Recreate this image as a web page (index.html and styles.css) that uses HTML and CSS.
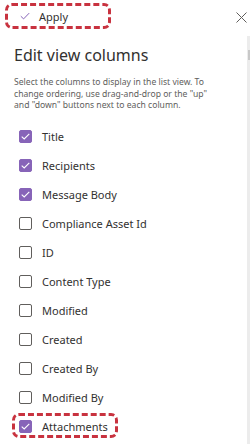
FILE: index.html
```html
<!DOCTYPE html>
<html>
<head>
<meta charset="utf-8">
<link rel="stylesheet" href="styles.css">
</head>
<body>
<div class="header">
  <div class="apply">
    <svg class="apply-icon" width="10" height="8" viewBox="0 0 10 8"><path d="M0.8 4.2 L3.6 6.9 L9.2 1.1" fill="none" stroke="#8764b8" stroke-width="1"/></svg>
    <span>Apply</span>
  </div>
  <svg class="close" width="11" height="11" viewBox="0 0 11 11"><path d="M0.5 0.5 L10.5 10.5 M10.5 0.5 L0.5 10.5" stroke="#605e5c" stroke-width="1"/></svg>
</div>
<div class="main">
  <div class="content">
    <h1 class="title">Edit view columns</h1>
    <p class="desc">Select the columns to display in the list view. To<br>change ordering, use drag-and-drop or the "up"<br>and "down" buttons next to each column.</p>
    <ul class="list">
      <li class="row"><span class="box checked"><svg width="9" height="7" viewBox="0 0 9 7"><path d="M0.7 3.6 L3.2 6 L8.3 0.8" fill="none" stroke="#fff" stroke-width="1.1"/></svg></span>Title</li>
      <li class="row"><span class="box checked"><svg width="9" height="7" viewBox="0 0 9 7"><path d="M0.7 3.6 L3.2 6 L8.3 0.8" fill="none" stroke="#fff" stroke-width="1.1"/></svg></span>Recipients</li>
      <li class="row"><span class="box checked"><svg width="9" height="7" viewBox="0 0 9 7"><path d="M0.7 3.6 L3.2 6 L8.3 0.8" fill="none" stroke="#fff" stroke-width="1.1"/></svg></span>Message Body</li>
      <li class="row"><span class="box"></span>Compliance Asset Id</li>
      <li class="row"><span class="box"></span>ID</li>
      <li class="row"><span class="box"></span>Content Type</li>
      <li class="row"><span class="box"></span>Modified</li>
      <li class="row"><span class="box"></span>Created</li>
      <li class="row"><span class="box"></span>Created By</li>
      <li class="row"><span class="box"></span>Modified By</li>
      <li class="row highlight"><span class="box checked"><svg width="9" height="7" viewBox="0 0 9 7"><path d="M0.7 3.6 L3.2 6 L8.3 0.8" fill="none" stroke="#fff" stroke-width="1.1"/></svg></span>Attachments</li>
    </ul>
  </div>
  <div class="scroll"><div class="thumb"></div></div>
</div>
</body>
</html>
```
FILE: styles.css
```css
html, body {
  margin: 0;
  padding: 0;
  background: #ffffff;
}
body {
  width: 251px;
  height: 444px;
  overflow: hidden;
  font-family: "Noto Sans", "Open Sans", sans-serif;
  color: #323130;
}
.header {
  display: flex;
  justify-content: space-between;
  align-items: flex-start;
  height: 36px;
  box-sizing: border-box;
  padding: 3px 4px 0 5px;
}
.apply {
  box-sizing: border-box;
  width: 106px;
  height: 26px;
  border: 3px dashed #c8323f;
  border-radius: 7px;
  display: flex;
  align-items: center;
  padding-left: 12px;
  gap: 9px;
  font-size: 11px;
  color: #323130;
}
.apply-icon {
  display: block;
}
.close {
  display: block;
  margin-top: 9px;
}
.main {
  display: flex;
  height: 408px;
}
.content {
  flex: 1;
  padding-left: 14px;
}
.scroll {
  width: 3px;
  margin-right: 1px;
  background: #ececec;
  padding-top: 14px;
}
.thumb {
  width: 2px;
  margin-left: 1px;
  height: 10px;
  background: #c8c8c8;
}
.title {
  margin: 9px 0 0 0;
  font-size: 16px;
  line-height: 20px;
  font-weight: 400;
  color: #323130;
}
.desc {
  margin: 12px 0 0 0;
  font-size: 8.6px;
  line-height: 11.5px;
  color: #605e5c;
  white-space: nowrap;
}
.list {
  list-style: none;
  margin: 10px 0 0 0;
  padding: 0;
}
.row {
  display: flex;
  align-items: center;
  height: 29px;
  gap: 10px;
  padding-left: 5px;
  font-size: 11px;
  color: #323130;
}
.box {
  box-sizing: border-box;
  width: 13px;
  height: 13px;
  border: 1px solid #605e5c;
  border-radius: 2px;
  display: flex;
  align-items: center;
  justify-content: center;
  flex: none;
}
.box.checked {
  background: #8764b8;
  border-color: #8764b8;
}
.box svg {
  display: block;
}
.highlight {
  position: relative;
}
.highlight::after {
  content: "";
  position: absolute;
  left: -2px;
  top: 1px;
  width: 106px;
  height: 25px;
  box-sizing: border-box;
  border: 3px dashed #c8323f;
  border-radius: 7px;
}
```
